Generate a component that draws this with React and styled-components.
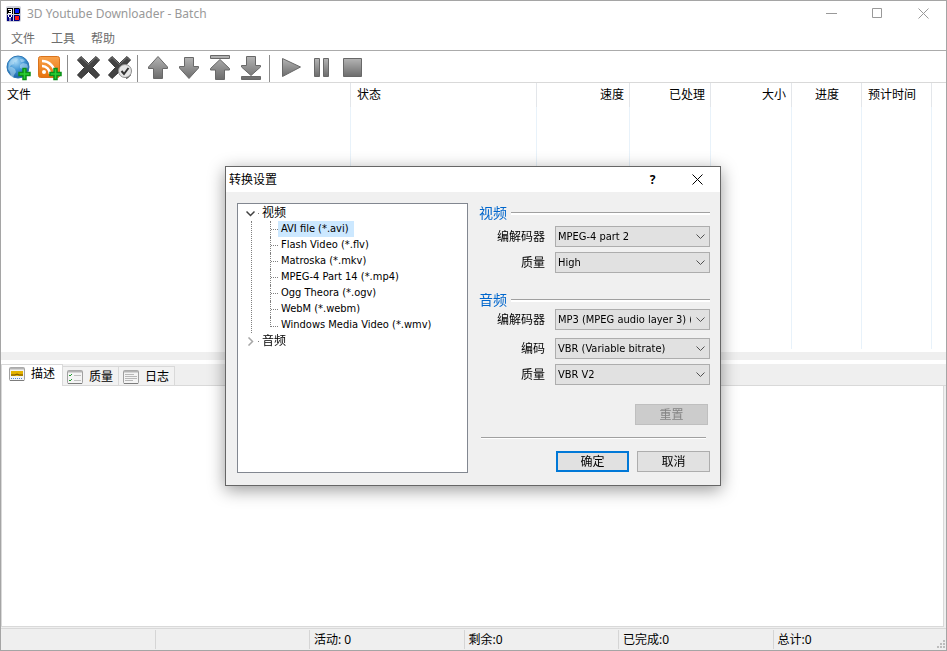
import styled, { createGlobalStyle } from "styled-components";

const columns = [
  { name: "文件", width: 350 },
  { name: "状态", width: 186 },
  { name: "速度", width: 93, align: "right" },
  { name: "已处理", width: 81, align: "right" },
  { name: "大小", width: 81, align: "right" },
  { name: "进度", width: 70, align: "center" },
  { name: "预计时间", width: 70 },
  { name: "" },
];

const formats = [
  "AVI file (*.avi)",
  "Flash Video (*.flv)",
  "Matroska (*.mkv)",
  "MPEG-4 Part 14 (*.mp4)",
  "Ogg Theora (*.ogv)",
  "WebM (*.webm)",
  "Windows Media Video (*.wmv)",
];

const statuses = ["", "", "活动: 0", "剩余:0", "已完成:0", "总计:0"];

function Logo() {
  return (
    <svg width="16" height="16" viewBox="0 0 16 16">
      <rect width="15" height="16" rx="2" fill="#cfd1da" />
      <rect x="1" y="2" width="6" height="6" fill="#000" />
      <path d="M2 3.500h3M3 5.500h2M2 7.500h3M5.500 3v5" stroke="#fff" fill="none" />
      <path d="M8 2h5l1 1v4l-1 1H8z" fill="#000" />
      <rect x="9" y="3" width="4" height="4" fill="#0018ff" />
      <rect x="1" y="9" width="6" height="6" fill="#000080" />
      <path d="M2.500 9v2M5.500 9v2M3 11.500h2M4 12v3" stroke="#fff" fill="none" />
      <path d="M8 9h5l1 1v4l-1 1H8z" fill="#000080" />
      <rect x="9" y="10" width="4" height="4" fill="#ff1c1c" />
    </svg>
  );
}

function Plus() {
  return (
    <path
      d="M17 13.500h3v4h4v3h-4v4h-3v-4h-4v-3h4z"
      fill="#2bd035"
      stroke="#0b8f18"
      strokeWidth="1.500"
    />
  );
}

function GlobeIcon() {
  return (
    <svg width="26" height="26" viewBox="0 0 26 26">
      <defs>
        <radialGradient id="globe" cx="0.4" cy="0.25" r="0.8">
          <stop offset="0" stopColor="#a9daf7" />
          <stop offset="0.5" stopColor="#3f94d4" />
          <stop offset="1" stopColor="#14589c" />
        </radialGradient>
      </defs>
      <circle cx="12" cy="12" r="11" fill="url(#globe)" stroke="#2d76b4" />
      <path
        d="M3 8l3-4 4-1 2 1-1 2-3 1 0 2-3 1-1 2 2 0 3 2 1 3-2 3-1 3-2-2-1-4-2-3zM14 4l3 0 2 2-2 1-2 0zM14 10l3-2 4 1 1 3-2 3-3-1-3-1z"
        fill="#c4e4f5"
        opacity="0.5"
      />
      <Plus />
    </svg>
  );
}

function FeedIcon() {
  return (
    <svg width="26" height="26" viewBox="0 0 26 26">
      <defs>
        <linearGradient id="feed" x1="0" y1="0" x2="0" y2="1">
          <stop offset="0" stopColor="#f9a34c" />
          <stop offset="1" stopColor="#e8720c" />
        </linearGradient>
      </defs>
      <rect x="1.500" y="1.500" width="21" height="21" rx="2" fill="url(#feed)" stroke="#d9731c" />
      <circle cx="7" cy="17" r="2" fill="#fff" />
      <path d="M5 11a8 8 0 0 1 8 8M5 6a13 13 0 0 1 13 13" stroke="#fff" strokeWidth="2.500" fill="none" />
      <Plus />
    </svg>
  );
}

function CrossIcon({ checked }) {
  return (
    <svg width="26" height="26" viewBox="0 0 26 26">
      <path
        d="M1.500 5l3.500-3.500 7.500 7 7.500-7L23.500 5l-7 7.500 7 7.500-3.500 3.500-7.500-7-7.500 7L1.500 20l7-7.500z"
        fill="#444"
        stroke="#2d2d2d"
        strokeWidth="1"
      />
      <path d="M2.500 5L5 2.500l7.500 7 7.500-7L22.500 5" fill="none" stroke="#777" />
      {checked && (
        <>
          <circle cx="18" cy="16" r="6.500" fill="#e6e6e6" stroke="#8e8e8e" />
          <path d="M14.500 16l2.500 3 4.500-6" fill="none" stroke="#333" strokeWidth="2" />
        </>
      )}
    </svg>
  );
}

function GrayIcon({ d }) {
  return (
    <svg width="26" height="26" viewBox="0 0 26 26">
      <defs>
        <linearGradient id="gray" x1="0" y1="0" x2="0" y2="1">
          <stop offset="0" stopColor="#b4b4b4" />
          <stop offset="1" stopColor="#6c6c6c" />
        </linearGradient>
      </defs>
      <path d={d} fill="url(#gray)" stroke="#686868" strokeLinejoin="round" />
    </svg>
  );
}

function TabIcon({ kind }) {
  return (
    <svg width="16" height="14" viewBox="0 0 16 14">
      <rect x="0.500" y="0.500" width="15" height="13" rx="1" fill="#f4f4f4" stroke="#a0a0a0" />
      <path d="M1 1.500h14" stroke="#b4b4b4" strokeWidth="2" />
      <path d="M1 13.500h14" stroke="#7c7c7c" />
      {kind === "info" && (
        <>
          <rect x="2" y="4" width="12" height="5" fill="#e3b200" />
          <path d="M2 8h4l2-1 2 1h4" stroke="#6b4a00" fill="none" />
          <path d="M2 11.500h12" stroke="#4a86d8" strokeDasharray="1 1" />
        </>
      )}
      {kind === "quality" && (
        <>
          <path d="M2 5l1 1 2-2M2 10l1 1 2-2" stroke="#1f9d2c" fill="none" />
          <path d="M7 5.500h7M7 10.500h7" stroke="#c0c0c0" />
        </>
      )}
      {kind === "log" && (
        <path d="M2 4.500h9M2 6.500h12M2 8.500h12M2 10.500h8" stroke="#b8b8b8" />
      )}
    </svg>
  );
}

function Arrow({ open }) {
  return (
    <svg width="9" height="9" viewBox="0 0 9 9">
      <path
        d={open ? "M0.500 2.500l4 4 4-4" : "M2.500 0.500l4 4-4 4"}
        fill="none"
        stroke={open ? "#404040" : "#a6a6a6"}
        strokeWidth="1.500"
      />
    </svg>
  );
}

const tools = [
  [
    { label: "添加链接", icon: <GlobeIcon /> },
    { label: "添加订阅", icon: <FeedIcon /> },
  ],
  [
    { label: "删除", icon: <CrossIcon /> },
    { label: "删除已完成", icon: <CrossIcon checked /> },
  ],
  [
    { label: "上移", icon: <GrayIcon d="M12 1.500L21.500 12v1.500h-5v10h-9v-10h-5V12z" /> },
    { label: "下移", icon: <GrayIcon d="M12 23.500L2.500 13v-1.500h5v-9h9v9h5V13z" /> },
    { label: "移到顶部", icon: <GrayIcon d="M2.500 0.500h19v3h-19zM12 4.500l9.500 9v1.500h-5v9.500h-9V15h-5v-1.500z" /> },
    { label: "移到底部", icon: <GrayIcon d="M2.500 21.500h19v3h-19zM12 20.500L2.500 12v-1.500h5v-9h9v9h5V12z" /> },
  ],
  [
    { label: "开始", icon: <GrayIcon d="M4.500 3.500L22.500 12 4.500 21.500z" /> },
    { label: "暂停", icon: <GrayIcon d="M5.500 3.500h5v18h-5zM14.500 3.500h5v18h-5z" /> },
    { label: "停止", icon: <GrayIcon d="M3.500 3.500h18v18h-18z" /> },
  ],
];

function Field({ id, label, value, gap }) {
  return (
    <FieldRow $gap={gap}>
      <label htmlFor={id}>{label}</label>
      <SelectBox>
        <Select id={id} defaultValue={value}>
          <option>{value}</option>
        </Select>
        <svg width="9" height="6" viewBox="0 0 9 6">
          <path d="M0.500 0.500l4 4 4-4" fill="none" stroke="#505050" />
        </svg>
      </SelectBox>
    </FieldRow>
  );
}

function SettingsDialog() {
  return (
    <Overlay>
      <Dialog role="dialog" aria-labelledby="dialog-title">
        <DialogBar>
          <DialogTitle id="dialog-title">转换设置</DialogTitle>
          <DialogControl aria-label="帮助">
            <b>?</b>
          </DialogControl>
          <DialogControl aria-label="关闭">
            <svg width="11" height="11" viewBox="0 0 11 11">
              <path d="M0.500 0.500l10 10M10.500 0.500l-10 10" stroke="#000" />
            </svg>
          </DialogControl>
        </DialogBar>
        <DialogBody>
          <Tree>
            <Branch>
              <Arrow open />
              <span>视频</span>
            </Branch>
            <Leaves>
              {formats.map((name, i) => (
                <Leaf key={name}>
                  <LeafName $selected={i === 0}>{name}</LeafName>
                </Leaf>
              ))}
            </Leaves>
            <Branch>
              <Arrow />
              <span>音频</span>
            </Branch>
          </Tree>
          <Form>
            <GroupTitle>视频</GroupTitle>
            <Field id="video-codec" label="编解码器" value="MPEG-4 part 2" />
            <Field id="video-quality" label="质量" value="High" gap={5} />
            <GroupTitle $spaced>音频</GroupTitle>
            <Field id="audio-codec" label="编解码器" value="MP3 (MPEG audio layer 3) (lame)" />
            <Field id="audio-encoding" label="编码" value="VBR (Variable bitrate)" gap={8} />
            <Field id="audio-quality" label="质量" value="VBR V2" gap={5} />
            <ResetRow>
              <Button disabled>重置</Button>
            </ResetRow>
            <Rule />
            <Actions>
              <Button $primary>确定</Button>
              <Button>取消</Button>
            </Actions>
          </Form>
        </DialogBody>
      </Dialog>
    </Overlay>
  );
}

function App() {
  return (
    <>
      <GlobalStyle />
      <Window>
        <TitleBar>
          <Logo />
          <Title>3D Youtube Downloader - Batch</Title>
          <WindowControl aria-label="最小化">
            <svg width="11" height="11" viewBox="0 0 11 11">
              <path d="M0 5.500h11" stroke="#999" />
            </svg>
          </WindowControl>
          <WindowControl aria-label="最大化">
            <svg width="11" height="11" viewBox="0 0 11 11">
              <path d="M0.500 0.500h9v9h-9z" fill="none" stroke="#999" />
            </svg>
          </WindowControl>
          <WindowControl aria-label="关闭">
            <svg width="11" height="11" viewBox="0 0 11 11">
              <path d="M0.500 0.500l10 10M10.500 0.500l-10 10" stroke="#999" />
            </svg>
          </WindowControl>
        </TitleBar>
        <Menu>
          <MenuItem>文件</MenuItem>
          <MenuItem>工具</MenuItem>
          <MenuItem>帮助</MenuItem>
        </Menu>
        <Toolbar>
          {tools.map((group, i) => (
            <ToolGroup key={i}>
              {group.map((tool) => (
                <Tool key={tool.label} aria-label={tool.label}>
                  {tool.icon}
                </Tool>
              ))}
            </ToolGroup>
          ))}
        </Toolbar>
        <List>
          <Table>
            <thead>
              <tr>
                {columns.map((c, i) => (
                  <HeadCell key={i} $width={c.width} $align={c.align}>
                    {c.name}
                  </HeadCell>
                ))}
              </tr>
            </thead>
            <tbody>
              <tr>
                {columns.map((c, i) => (
                  <Cell key={i} />
                ))}
              </tr>
            </tbody>
          </Table>
        </List>
        <Splitter />
        <Tabs role="tablist">
          <Tab role="tab" aria-selected="true" $active>
            <TabIcon kind="info" />
            描述
          </Tab>
          <Tab role="tab">
            <TabIcon kind="quality" />
            质量
          </Tab>
          <Tab role="tab">
            <TabIcon kind="log" />
            日志
          </Tab>
        </Tabs>
        <Pane role="tabpanel" />
        <StatusBar>
          {statuses.map((text, i) => (
            <Status key={i}>{text}</Status>
          ))}
          <Grip width="9" height="9" viewBox="0 0 9 9">
            <path
              d="M6 0h2v2h-2zM3 3h2v2h-2zM6 3h2v2h-2zM0 6h2v2h-2zM3 6h2v2h-2zM6 6h2v2h-2z"
              fill="#bdbdbd"
            />
          </Grip>
        </StatusBar>
      </Window>
      <SettingsDialog />
    </>
  );
}

export default App;

const GlobalStyle = createGlobalStyle`
  * {
    box-sizing: border-box;
  }

  body {
    margin: 0;
    color: #000;
    font-family: "Noto Sans", "Noto Sans CJK SC", sans-serif;
    font-size: 12px;
    line-height: 16px;
  }

  button,
  select {
    margin: 0;
    color: inherit;
    font: inherit;
  }

  svg {
    display: block;
    flex: none;
  }
`;

const Window = styled.div`
  display: flex;
  flex-direction: column;
  min-height: 100vh;
  border: 1px solid #a5a5a5;
  background: #fff;
`;

const TitleBar = styled.header`
  display: flex;
  align-items: center;
  height: 25px;
  padding-left: 5px;
`;

const Title = styled.h1`
  flex: 1;
  margin: 0;
  padding-left: 5px;
  color: #999;
  font-size: 12px;
  font-weight: 400;
`;

const PlainButton = styled.button`
  display: flex;
  align-items: center;
  justify-content: center;
  padding: 0;
  border: 0;
  background: none;
`;

const WindowControl = styled(PlainButton)`
  width: 46px;
  height: 25px;
`;

const Menu = styled.nav`
  display: flex;
  height: 25px;
  padding: 2px 0 0 2px;
  border-bottom: 1px solid #ababab;
`;

const MenuItem = styled(PlainButton)`
  padding: 0 8px;
  color: #6d6d6d;
`;

const Toolbar = styled.div`
  display: flex;
  align-items: center;
  height: 32px;
  padding: 3px 0 0 2px;
  border-bottom: 1px solid #d9d9d9;
`;

const ToolGroup = styled.div`
  display: flex;
  align-items: center;

  & + &::before {
    content: "";
    width: 1px;
    height: 27px;
    margin: 0 5px 0 2px;
    background: #8c8c8c;
  }
`;

const Tool = styled(PlainButton)`
  width: 31px;
  height: 28px;
`;

const List = styled.main`
  display: flex;
  flex: 10 1 0;
  padding-bottom: 3px;
`;

const Table = styled.table`
  width: 100%;
  border-collapse: separate;
  border-spacing: 0;
  table-layout: fixed;
`;

const HeadCell = styled.th`
  width: ${(p) => (p.$width ? `${p.$width}px` : "auto")};
  height: 24px;
  padding: 0 5px 0 6px;
  border-right: 1px solid #e3e6ea;
  font-weight: 400;
  text-align: ${(p) => p.$align || "left"};
  white-space: nowrap;

  &:last-child {
    border-right: 0;
  }
`;

const Cell = styled.td`
  padding: 0;
  border-right: 1px solid #e8f2fa;

  &:last-child {
    border-right: 0;
  }
`;

const Splitter = styled.div`
  height: 12px;
  border-bottom: 4px solid #fff;
  background: #efefef;
`;

const Tabs = styled.div`
  display: flex;
  align-items: flex-end;
  height: 22px;
  background: #efefef;
  box-shadow: inset 0 -1px #d9d9d9;
`;

const Tab = styled(PlainButton)`
  gap: 6px;
  height: ${(p) => (p.$active ? 22 : 20)}px;
  padding: ${(p) => (p.$active ? "0 7px 3px" : "1px 5px 0 4px")};
  border: 1px solid #d9d9d9;
  border-left-width: ${(p) => (p.$active ? 1 : 0)}px;
  border-bottom-width: ${(p) => (p.$active ? 0 : 1)}px;
  background: ${(p) => (p.$active ? "#fff" : "#f2f2f2")};
`;

const Pane = styled.section`
  flex: 9 1 0;
  margin: 0 2px 1px 0;
  border: 1px solid #d9d9d9;
  border-top: 0;
  box-shadow: 2px 0 #efefef;
`;

const StatusBar = styled.footer`
  display: flex;
  align-items: flex-end;
  height: 22px;
  padding: 1px 0;
  border-top: 1px solid #d9d9d9;
  background: #efefef;
  box-shadow: 0 -1px #efefef;
`;

const Status = styled.div`
  flex: 1;
  height: 19px;
  padding: 2px 4px 0;
  border-left: 1px solid #d5d5d5;

  &:first-child {
    border-left: 0;
  }
`;

const Grip = styled.svg`
  margin-left: 10px;
`;

const Overlay = styled.div`
  position: fixed;
  inset: 0;
  display: flex;
  align-items: center;
  justify-content: center;
  padding: 1px 1px 0 0;
`;

const Dialog = styled.section`
  width: 496px;
  border: 1px solid #666;
  background: #f0f0f0;
  box-shadow: 0 4px 16px rgba(0, 0, 0, 0.4);
`;

const DialogBar = styled.header`
  display: flex;
  align-items: center;
  height: 25px;
  background: #fff;
`;

const DialogTitle = styled.h2`
  flex: 1;
  margin: 0;
  padding-left: 3px;
  font-size: 12px;
  font-weight: 400;
`;

const DialogControl = styled(PlainButton)`
  width: 45px;
  height: 25px;
`;

const DialogBody = styled.div`
  display: flex;
  gap: 11px;
  padding: 11px 10px 12px 11px;
`;

const Tree = styled.div`
  width: 231px;
  padding: 1px 8px;
  border: 1px solid #828790;
  background: #fff;
  font-family: "DejaVu Sans Condensed", "Noto Sans CJK SC", sans-serif;
  font-size: 11px;
`;

const Branch = styled.div`
  display: flex;
  align-items: center;
  height: 16px;
  font-size: 12px;

  span::before {
    content: "";
    display: inline-block;
    width: 1px;
    height: 1px;
    margin: 0 3px;
    vertical-align: middle;
    background: #808080;
  }
`;

const Leaves = styled.ul`
  margin: 0 0 0 5px;
  padding: 0 0 0 18px;
  border-left: 1px dotted #808080;
  list-style: none;
`;

const Leaf = styled.li`
  display: flex;
  height: 16px;

  &::before {
    content: "";
    width: 7px;
    height: 9px;
    border-bottom: 1px dotted #808080;
    border-left: 1px dotted #808080;
  }

  &:not(:last-child)::before {
    height: 16px;
    border-bottom: 0;
    background: repeating-linear-gradient(90deg, #808080 0 1px, transparent 1px 2px) no-repeat 0 8px / 7px 1px;
  }
`;

const LeafName = styled.span`
  padding: 0 5px 0 3px;
  background: ${(p) => (p.$selected ? "#cce8ff" : "none")};
`;

const Form = styled.form`
  flex: 1;
  display: flex;
  flex-direction: column;
  padding: 1px 0;
`;

const GroupTitle = styled.h3`
  display: flex;
  align-items: center;
  gap: 4px;
  height: 18px;
  margin: ${(p) => (p.$spaced ? "18px 0 0" : "0 0 4px")};
  color: #0066cc;
  font-size: 14px;
  font-weight: 400;

  &::after {
    content: "";
    flex: 1;
    height: 2px;
    border-top: 1px solid #a0a0a0;
    background: #fff;
  }
`;

const FieldRow = styled.div`
  display: flex;
  align-items: center;
  justify-content: flex-end;
  gap: 10px;
  margin-top: ${(p) => p.$gap || 0}px;
`;

const SelectBox = styled.div`
  display: grid;
  width: 155px;
  align-items: center;

  & > * {
    grid-area: 1 / 1;
  }

  svg {
    justify-self: end;
    margin-right: 5px;
    pointer-events: none;
  }
`;

const Select = styled.select`
  width: 100%;
  height: 21px;
  padding: 0 18px 0 2px;
  border: 1px solid #adadad;
  border-radius: 0;
  background: #e1e1e1;
  font-family: "DejaVu Sans Condensed", sans-serif;
  font-size: 11px;
  appearance: none;
`;

const ResetRow = styled.div`
  display: flex;
  justify-content: flex-end;
  margin: 19px 2px 12px 0;
`;

const Rule = styled.hr`
  width: 225px;
  height: 2px;
  margin: 0 0 12px 2px;
  border: 0;
  border-top: 1px solid #a0a0a0;
  background: #fff;
`;

const Actions = styled.div`
  display: flex;
  justify-content: flex-end;
  gap: 8px;
`;

const Button = styled.button.attrs({ type: "button" })`
  width: 73px;
  height: 21px;
  padding: 0;
  border: ${(p) => (p.$primary ? "2px solid #0078d7" : "1px solid #adadad")};
  background: #e1e1e1;

  &:disabled {
    border-color: #bfbfbf;
    background: #ccc;
    color: #838383;
  }
`;
